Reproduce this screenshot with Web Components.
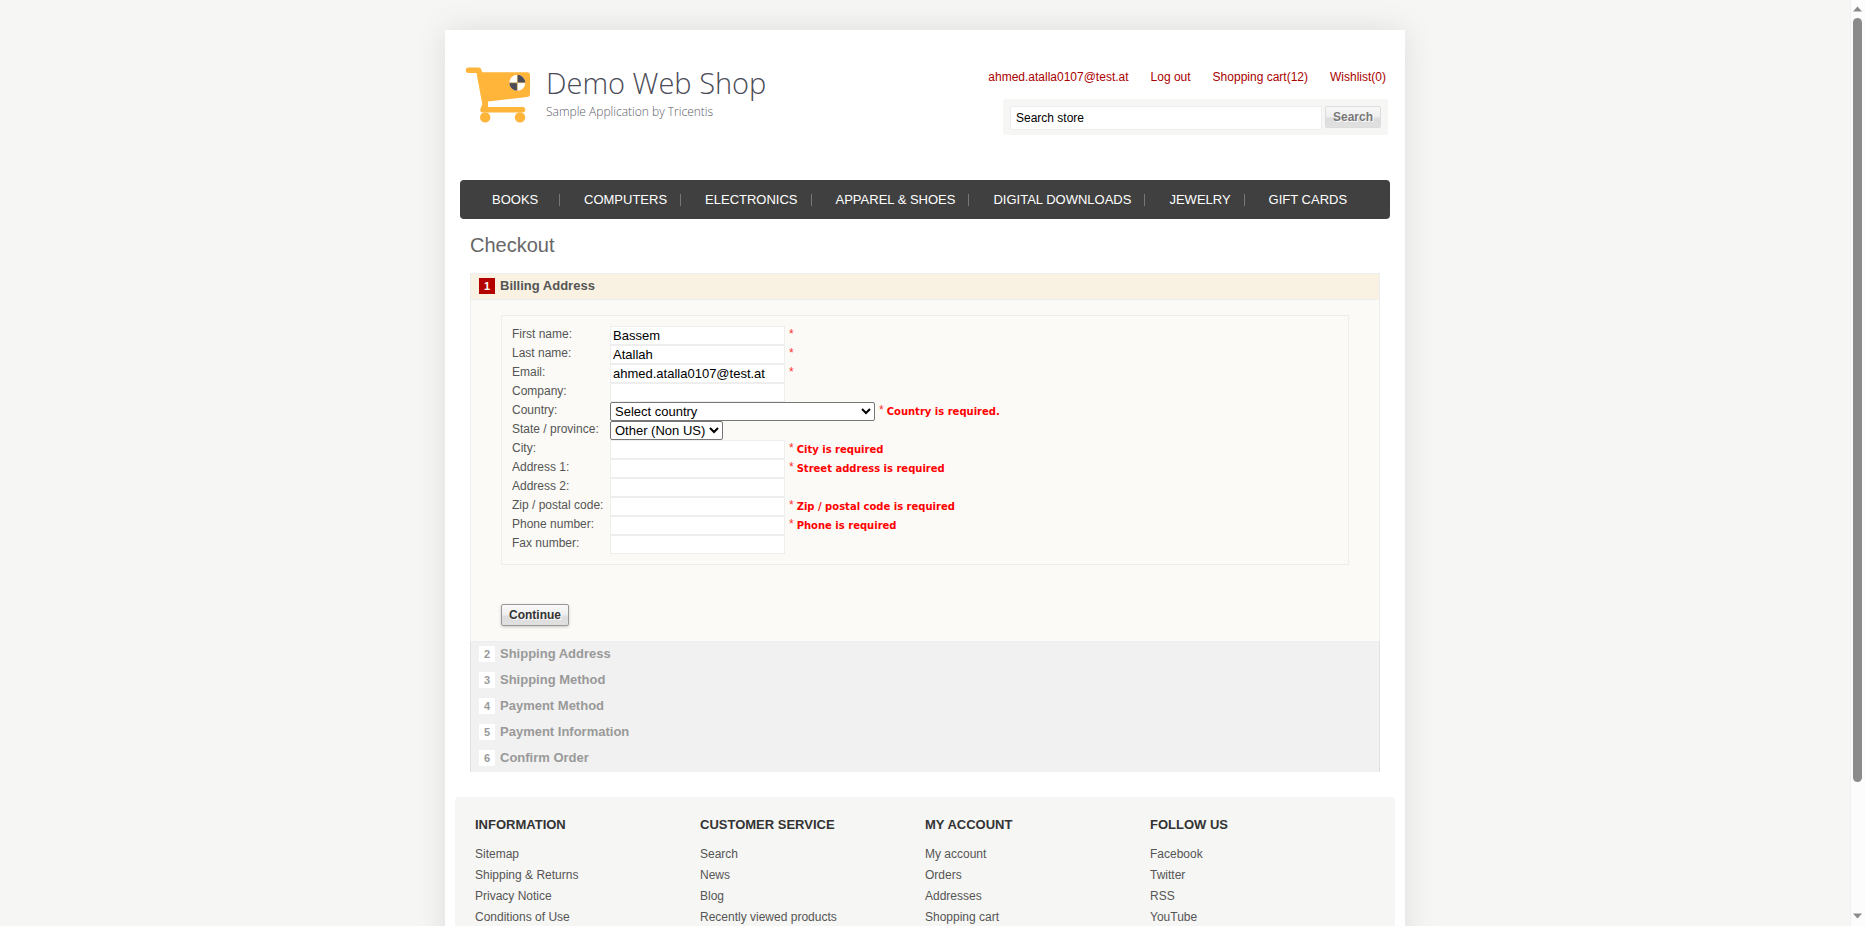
<!DOCTYPE html>
<html lang="en">
<head>
<meta charset="utf-8">
<title>Demo Web Shop. Checkout</title>
<style>
  html, body { margin: 0; height: 100%; }
  body { font: 12px/14px "Liberation Sans", Arial, sans-serif; color: #555; background: #f6f6f4; overflow: hidden; }
</style>
</head>
<body>
<shop-app>
  <shop-header>
    <shop-logo></shop-logo>
    <user-links></user-links>
    <shop-search></shop-search>
  </shop-header>
  <shop-nav items="BOOKS|COMPUTERS|ELECTRONICS|APPAREL &amp; SHOES|DIGITAL DOWNLOADS|JEWELRY|GIFT CARDS"></shop-nav>
  <checkout-page>
    <checkout-step number="1" heading="Billing Address" active>
      <billing-form>
        <form-field label="First name:" value="Bassem" required></form-field>
        <form-field label="Last name:" value="Atallah" required></form-field>
        <form-field label="Email:" value="ahmed.atalla0107@test.at" required></form-field>
        <form-field label="Company:"></form-field>
        <form-field label="Country:" option="Select country" wide required error="Country is required."></form-field>
        <form-field label="State / province:" option="Other (Non US)"></form-field>
        <form-field label="City:" required error="City is required"></form-field>
        <form-field label="Address 1:" required error="Street address is required"></form-field>
        <form-field label="Address 2:"></form-field>
        <form-field label="Zip / postal code:" required error="Zip / postal code is required"></form-field>
        <form-field label="Phone number:" required error="Phone is required"></form-field>
        <form-field label="Fax number:"></form-field>
      </billing-form>
    </checkout-step>
    <checkout-step number="2" heading="Shipping Address"></checkout-step>
    <checkout-step number="3" heading="Shipping Method"></checkout-step>
    <checkout-step number="4" heading="Payment Method"></checkout-step>
    <checkout-step number="5" heading="Payment Information"></checkout-step>
    <checkout-step number="6" heading="Confirm Order"></checkout-step>
  </checkout-page>
  <shop-footer>
    <footer-column heading="INFORMATION" links="Sitemap|Shipping &amp; Returns|Privacy Notice|Conditions of Use"></footer-column>
    <footer-column heading="CUSTOMER SERVICE" links="Search|News|Blog|Recently viewed products"></footer-column>
    <footer-column heading="MY ACCOUNT" links="My account|Orders|Addresses|Shopping cart"></footer-column>
    <footer-column heading="FOLLOW US" links="Facebook|Twitter|RSS|YouTube"></footer-column>
  </shop-footer>
</shop-app>

<script>
const esc = s => (s || "").replace(/&/g, "&amp;").replace(/</g, "&lt;").replace(/"/g, "&quot;");

function define(name, render) {
  customElements.define(name, class extends HTMLElement {
    constructor() {
      super();
      this.attachShadow({ mode: "open" }).innerHTML = render(this);
    }
  });
}

define("shop-app", () => `
  <style>
    :host { display: flex; height: 100vh; }
    main { flex: 1; min-width: 0; overflow-y: auto; scrollbar-width: none; }
    .card { max-width: 960px; margin: 30px auto 0; background: #fff; box-shadow: 0 0 30px rgba(0,0,0,.1); }
  </style>
  <main><div class="card"><slot></slot></div></main>
  <scroll-rail></scroll-rail>`);

define("scroll-rail", () => `
  <style>
    :host { display: flex; flex-direction: column; align-items: center; box-sizing: border-box; width: 15px; padding: 6px 1px 7px 0; background: #fcfcfc; border-left: 1px solid #f0f0f0; }
    svg { display: block; flex: none; }
    .track { flex: 1; width: 9px; margin: 6px 0 7px; }
    .thumb { height: 86%; border-radius: 5px; background: #8b8b8b; }
  </style>
  <svg width="9" height="6"><path d="M4.500 0.500L9 5.500H0Z" fill="#8b8b8b"/></svg>
  <div class="track"><div class="thumb"></div></div>
  <svg width="9" height="6"><path d="M0 0.500H9L4.500 5.500Z" fill="#8b8b8b"/></svg>`);

define("shop-header", () => `
  <style>
    :host { display: grid; grid-template-columns: 1fr auto; grid-template-rows: auto 1fr; row-gap: 15px; padding: 37px 17px 45px 20px; justify-items: end; align-items: start; }
    ::slotted(shop-logo) { grid-row: 1 / 3; justify-self: start; }
  </style>
  <slot></slot>`);

define("shop-logo", () => `
  <style>
    :host { display: block; }
    a { display: flex; gap: 15px; text-decoration: none; color: #4a4b57; font-family: "Open Sans", sans-serif; font-weight: 300; }
    svg { display: block; flex: none; }
    strong { display: block; font-weight: 300; font-size: 29px; line-height: 32px; }
    small { display: block; font-size: 12px; line-height: 16px; padding-top: 5px; color: #5c5d68; }
  </style>
  <a href="#">
    <svg width="66" height="56" viewBox="0 0 66 56" aria-hidden="true">
      <g fill="#ffb43a">
        <path d="M3.500 0.500H14Q16 0.500 16.500 3L17.100 5.300H62Q65 5.300 65 8V27Q65 29.800 62 30.100L23 34.600V40H57.500A2.600 2.600 0 0 1 57.500 45.500H17.500Q15 45.300 15.200 42.500L17.300 37.200L11.500 5.900H3.500A2.700 2.700 0 0 1 3.500 0.500Z"/>
        <circle cx="20.200" cy="50.400" r="5.200"/>
        <circle cx="55" cy="50.400" r="5.200"/>
      </g>
      <circle cx="52.300" cy="15.800" r="8" fill="#fff"/>
      <path d="M52.300 7.800A8 8 0 0 1 60.300 15.800H52.300ZM52.300 23.800A8 8 0 0 1 44.300 15.800H52.300Z" fill="#4a4b57"/>
      <path d="M52.300 7.800V23.800M44.300 15.800H60.300" stroke="#ffb43a" stroke-width=".5"/>
    </svg>
    <span><strong>Demo Web Shop</strong><small>Sample Application by Tricentis</small></span>
  </a>`);

define("user-links", () => `
  <style>
    :host { display: flex; gap: 22px; margin-right: 2px; padding-top: 3px; }
    a { color: #a00; text-decoration: none; }
  </style>
  <a href="#">ahmed.atalla0107@test.at</a><a href="#">Log out</a><a href="#">Shopping cart(12)</a><a href="#">Wishlist(0)</a>`);

define("shop-search", () => `
  <style>
    :host { display: block; }
    form { display: flex; align-items: flex-start; gap: 3px; padding: 7px 7px 5px; background: #f6f6f4; border-radius: 3px; }
    input { box-sizing: border-box; width: 312px; height: 24px; padding: 0 5px; border: 1px solid #eee; font: 12px "Liberation Sans", Arial, sans-serif; color: #000; background: #fff; }
    button { box-sizing: border-box; width: 56px; height: 22px; padding: 0; border: 1px solid #ddd; border-radius: 2px; background: linear-gradient(#f8f8f8, #eee 50%, #ddd 55%, #e0e0e0); font: bold 12px "Liberation Sans", Arial, sans-serif; color: #777; text-shadow: 1px 1px #fff; }
  </style>
  <form><input type="text" value="Search store" aria-label="Search store"><button type="button">Search</button></form>`);

define("shop-nav", el => `
  <style>
    :host { display: block; margin: 0 15px; background: #404040; border-radius: 4px; }
    ul { display: flex; align-items: center; height: 39px; margin: 0; padding: 0 0 0 8px; list-style: none; }
    li { padding: 0 13px 0 24px; }
    li + li { border-left: 1px solid #777; height: 12px; display: flex; align-items: center; }
    a { display: block; min-width: 54px; font-size: 13px; line-height: 18px; color: #fff; text-decoration: none; white-space: nowrap; }
  </style>
  <ul>${el.getAttribute("items").split("|").map(t => `<li><a href="#">${esc(t)}</a></li>`).join("")}</ul>`);

define("checkout-page", () => `
  <style>
    :host { display: block; padding: 14px 25px 25px; }
    h1 { margin: 0 0 16px; font-size: 20px; line-height: 24px; font-weight: normal; color: #666; }
    .steps { border: 1px solid #e0e0e4; border-width: 0 1px; }
  </style>
  <h1>Checkout</h1>
  <div class="steps"><slot></slot></div>`);

define("checkout-step", el => `
  <style>
    :host { display: block; background: #f1f1f1; color: #999; }
    :host([active]) { color: #555; background: #fbfaf6; border: 1px solid #eee; margin: 0 -1px; }
    h2 { display: flex; gap: 5px; margin: 0; padding: 4px 8px 6px; font-size: 13px; line-height: 16px; }
    .number { width: 16px; height: 16px; background: #fff; font-size: 11px; line-height: 17px; text-align: center; }
    :host([active]) h2 { background: #f9f2e2; border-bottom: 1px solid #eee; padding: 4px 8px 5px; }
    :host([active]) .number { background: #b50000; color: #fff; }
    .body { padding: 15px 30px; }
    :host(:not([active])) .body { display: none; }
  </style>
  <h2><span class="number">${esc(el.getAttribute("number"))}</span><span>${esc(el.getAttribute("heading"))}</span></h2>
  <div class="body"><slot></slot></div>`);

define("billing-form", () => `
  <style>
    :host { display: block; }
    .fields { border: 1px solid #eee; padding: 10px; margin-bottom: 39px; }
    button { display: block; box-sizing: border-box; width: 68px; height: 22px; padding: 0; border: 1px solid #999; border-radius: 2px; background: linear-gradient(#fafafa, #eee 50%, #ddd 55%, #e0e0e0); box-shadow: 0 1px 3px rgba(0,0,0,.2); font: bold 12px "Liberation Sans", Arial, sans-serif; color: #333; text-shadow: 1px 1px #fff; }
  </style>
  <form>
    <div class="fields"><slot></slot></div>
    <button type="button">Continue</button>
  </form>`);

define("form-field", el => {
  const option = el.getAttribute("option");
  const control = option
    ? `<select id="control"><option>${esc(option)}</option></select>`
    : `<input id="control" type="text" value="${esc(el.getAttribute("value"))}">`;
  return `
  <style>
    :host { display: flex; height: 19px; }
    label { width: 98px; line-height: 17px; flex: none; }
    input, select { box-sizing: border-box; height: 19px; margin: 0; font: 13px "Liberation Sans", Arial, sans-serif; color: #000; background: #fff; }
    input { width: 175px; padding: 1px 2px; border: 1px solid #eee; }
    select { border: 1px solid #767676; border-radius: 2px; width: 113px; padding: 0; }
    :host([wide]) select { width: 265px; }
    .star { margin-left: 4px; line-height: 17px; color: #f33; }
    .error { margin-left: 3px; font: bold 10px/20px "DejaVu Sans", Verdana, sans-serif; color: #f00; }
  </style>
  <label for="control">${esc(el.getAttribute("label"))}</label>${control}
  ${el.hasAttribute("required") ? `<span class="star">*</span>` : ""}
  ${el.hasAttribute("error") ? `<span class="error">${esc(el.getAttribute("error"))}</span>` : ""}`;
});

define("shop-footer", () => `
  <style>
    :host { display: grid; grid-template-columns: repeat(4, 225px); margin: 0 10px; padding: 20px 20px 154px; background: #f6f6f4; border-radius: 4px; }
  </style>
  <slot></slot>`);

define("footer-column", el => `
  <style>
    :host { display: block; }
    h3 { margin: 0 0 11px; font-size: 13px; line-height: 16px; color: #333; }
    ul { margin: 0; padding: 0; list-style: none; }
    li { line-height: 21px; }
    a { color: #555; text-decoration: none; }
  </style>
  <h3>${esc(el.getAttribute("heading"))}</h3>
  <ul>${el.getAttribute("links").split("|").map(t => `<li><a href="#">${esc(t)}</a></li>`).join("")}</ul>`);
</script>
</body>
</html>
